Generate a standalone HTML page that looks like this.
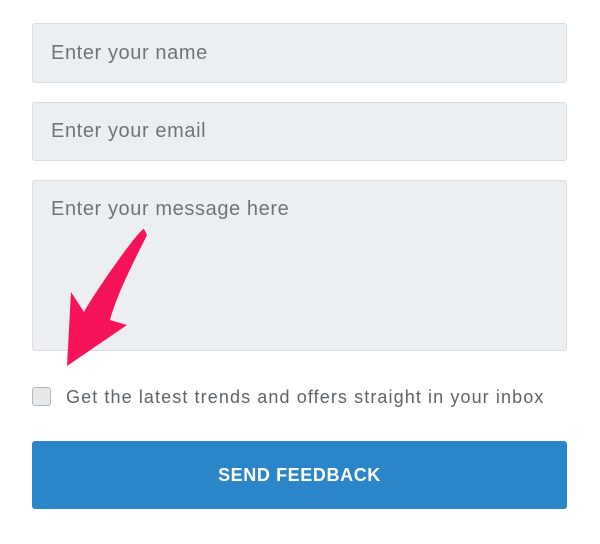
<!DOCTYPE html><html><head><style>
body{margin:0;width:600px;height:544px;background:#fff;position:relative;font-family:"Liberation Sans",sans-serif;overflow:hidden}
.f{position:absolute;left:32px;width:535px;background:#ebeff2;border:1px solid #d9dde0;border-radius:3px;color:#6f7478;font-size:20px;letter-spacing:0.6px;box-sizing:border-box;padding-left:18px}
</style></head><body>
<div class="f" style="top:23px;height:60px;line-height:58px">Enter your name</div>
<div class="f" style="top:102px;height:59px;line-height:57px">Enter your email</div>
<div class="f" style="top:180px;height:171px;padding-top:16px;line-height:24px">Enter your message here</div>
<svg style="position:absolute;left:0;top:0" width="600" height="544"><path d="M144 229 C140 228 96 290 84 312 L71 292 L67 366 L127 325 L110 320 C118 290 140 250 147 235 Z" fill="#f7135a"/></svg>
<div style="position:absolute;left:32px;top:387px;width:17px;height:17px;border:1px solid #b5b8ba;background:#e6e8ea;border-radius:3px"></div>
<div style="position:absolute;left:66px;top:385px;font-size:18px;letter-spacing:1.1px;color:#5f6367;line-height:24px;white-space:nowrap">Get the latest trends and offers straight in your inbox</div>
<div style="position:absolute;left:32px;top:441px;width:535px;height:68px;background:#2a86c9;border-radius:3px;color:#fff;font-weight:bold;font-size:18px;letter-spacing:0.6px;text-align:center;line-height:68px">SEND FEEDBACK</div>
</body></html>
